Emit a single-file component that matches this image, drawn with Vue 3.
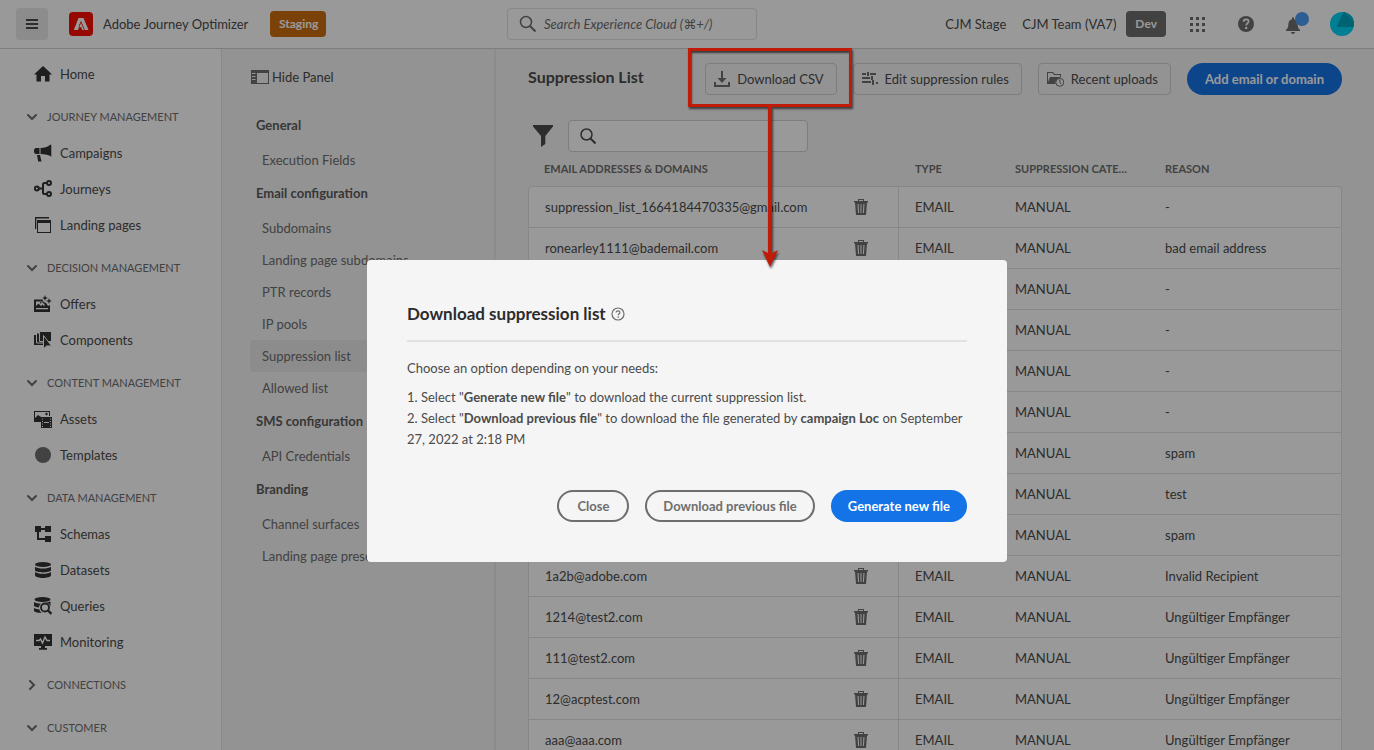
<script setup>
import { ref } from 'vue'

const query = ref('')
const filter = ref('')

const sections = [
  {
    title: 'JOURNEY MANAGEMENT',
    open: true,
    items: [
      { label: 'Campaigns', icon: 'campaigns' },
      { label: 'Journeys', icon: 'journeys' },
      { label: 'Landing pages', icon: 'pages' },
    ],
  },
  {
    title: 'DECISION MANAGEMENT',
    open: true,
    items: [
      { label: 'Offers', icon: 'offers' },
      { label: 'Components', icon: 'components' },
    ],
  },
  {
    title: 'CONTENT MANAGEMENT',
    open: true,
    items: [
      { label: 'Assets', icon: 'assets' },
      { label: 'Templates', icon: 'templates' },
    ],
  },
  {
    title: 'DATA MANAGEMENT',
    open: true,
    items: [
      { label: 'Schemas', icon: 'schemas' },
      { label: 'Datasets', icon: 'datasets' },
      { label: 'Queries', icon: 'queries' },
      { label: 'Monitoring', icon: 'monitoring' },
    ],
  },
  { title: 'CONNECTIONS', open: false, items: [] },
  { title: 'CUSTOMER', open: true, items: [] },
]

const groups = [
  { title: 'General', items: ['Execution Fields'] },
  {
    title: 'Email configuration',
    items: ['Subdomains', 'Landing page subdomains', 'PTR records', 'IP pools', 'Suppression list', 'Allowed list'],
  },
  { title: 'SMS configuration', items: ['API Credentials'] },
  { title: 'Branding', items: ['Channel surfaces', 'Landing page presets'] },
]

const rows = [
  ['suppression_list_1664184470335@gmail.com', '-'],
  ['ronearley1111@bademail.com', 'bad email address'],
  ['', '-'],
  ['', '-'],
  ['', '-'],
  ['', '-'],
  ['', 'spam'],
  ['', 'test'],
  ['', 'spam'],
  ['1a2b@adobe.com', 'Invalid Recipient'],
  ['1214@test2.com', 'Ungültiger Empfänger'],
  ['111@test2.com', 'Ungültiger Empfänger'],
  ['12@acptest.com', 'Ungültiger Empfänger'],
  ['aaa@aaa.com', 'Ungültiger Empfänger'],
]
</script>

<template>
  <div class="app">
    <header class="topbar">
      <button class="menu" type="button" aria-label="Menu">
        <svg width="12" height="10" viewBox="0 0 12 10"><path d="M0 0h12v2H0zM0 4h12v2H0zM0 8h12v2H0z" /></svg>
      </button>
      <svg class="logo" width="24" height="24" viewBox="0 0 24 24">
        <rect width="24" height="24" rx="4" fill="#fa0f00" />
        <path d="M9.500 6h5L19.500 18h-3.700L12 9 10 13.500h2.600l1.600 4.500H4.800z" fill="#fff" />
        <path d="M12 9.500 15.500 18h-2.300l-1.100-2.800H9.600z" fill="#fa0f00" />
        <path d="M12 10.800 15 18h-1.800l-1.100-2.800H10.200z" fill="#fff" />
        <path d="M12 10 9.900 15.200h2.200L13.200 18h-2.900L9 18 12 10z" fill="#fa0f00" />
      </svg>
      <span class="product">Adobe Journey Optimizer</span>
      <span class="tag staging">Staging</span>
      <label class="search">
        <svg width="18" height="18" viewBox="0 0 18 18"><circle cx="7" cy="7" r="5.500" fill="none" stroke="currentColor" stroke-width="1.500" /><path d="M11 11l5.500 5.500" stroke="currentColor" stroke-width="2" /></svg>
        <input v-model="query" type="search" placeholder="Search Experience Cloud (⌘+/)" aria-label="Search Experience Cloud" />
      </label>
      <div class="account">
        <span>CJM Stage</span>
        <span class="team">CJM Team (VA7)</span>
        <span class="tag dev">Dev</span>
        <button class="plain apps" type="button" aria-label="Apps">
          <svg width="15" height="15" viewBox="0 0 15 15"><path d="M0 0h3v3H0zM6 0h3v3H6zM12 0h3v3h-3zM0 6h3v3H0zM6 6h3v3H6zM12 6h3v3h-3zM0 12h3v3H0zM6 12h3v3H6zM12 12h3v3h-3z" /></svg>
        </button>
        <button class="plain help" type="button" aria-label="Help">
          <svg width="16" height="16" viewBox="0 0 16 16"><circle cx="8" cy="8" r="8" /><path d="M5.600 5.800C5.600 4 6.800 3.400 8.100 3.400c1.500 0 2.500.8 2.500 2.100 0 1.900-2.400 1.900-2.400 3.900" fill="none" stroke="#fff" stroke-width="1.700" /><circle cx="8.200" cy="11.900" r="1.200" fill="#fff" /></svg>
        </button>
        <button class="plain bell" type="button" aria-label="Notifications">
          <svg width="24" height="24" viewBox="0 0 24 24"><path d="M7 5.500h2v1.700c2.600.6 3.500 2.600 3.600 5 .1 3 .9 4.400 2.400 5.600V19H1v-1.200c1.500-1.200 2.300-2.600 2.400-5.600.1-2.400 1-4.400 3.600-5zM6 20h4c0 1.200-.9 2-2 2s-2-.8-2-2z" /><circle cx="17" cy="7" r="7" fill="#4c9bf5" /></svg>
        </button>
        <button class="plain avatar" type="button" aria-label="Profile">
          <svg width="24" height="24" viewBox="0 0 24 24"><defs><clipPath id="face"><circle cx="12" cy="12" r="12" /></clipPath></defs><g clip-path="url(#face)"><path d="M0 0h24v24H0z" fill="#00d2f5" /><path d="M13.500 0H24v15H6.500z" fill="#00a5bd" /><path d="M13.500 0 24 11V0z" fill="#00b4cf" /></g></svg>
        </button>
      </div>
    </header>

    <div class="body">
      <nav class="sidebar" aria-label="Main">
        <a class="nav-item" href="#">
          <svg width="18" height="18" viewBox="0 0 18 18"><path d="M9 1 0 9.500h2.500V16.500H7V11h4v5.500h4.500V9.500H18L14.500 6.100z" /></svg>
          Home
        </a>
        <section v-for="s in sections" :key="s.title">
          <button class="nav-head" type="button" :aria-expanded="s.open">
            <svg width="10" height="10" viewBox="0 0 10 10">
              <path :d="s.open ? 'M1 3l4 4 4-4' : 'M3 1l4 4-4 4'" fill="none" stroke="currentColor" stroke-width="2" stroke-linecap="round" />
            </svg>
            {{ s.title }}
          </button>
          <a v-for="item in s.items" :key="item.label" class="nav-item" href="#">
            <svg width="18" height="18" viewBox="0 0 18 18">
              <g v-if="item.icon === 'campaigns'"><path d="M2 4h3.500v6H2C.8 10 0 9 0 7s.8-3 2-3zM6.500 4C10 4 14 3 16 .7h1.300v12C15 10.800 11 10 6.500 10zM3 11h3l1.500 6.500H4.200z" /></g>
              <g v-else-if="item.icon === 'journeys'" fill="none" stroke="currentColor" stroke-width="2"><circle cx="2.800" cy="8.500" r="2" /><circle cx="15" cy="3" r="2" /><circle cx="15" cy="14" r="2" /><path d="M5 8.500h4M13 3h-2.500Q9 3 9 4.500v8Q9 14 10.500 14H13" /></g>
              <g v-else-if="item.icon === 'pages'"><path d="M1 1h14v1.500H2.300V13H1z" /><path d="M3 4h14v13H3zM4 7v9h12V7z" fill-rule="evenodd" /></g>
              <g v-else-if="item.icon === 'offers'"><path d="M0 4.500h8.500l1 2.500 2.500 1 2 3 2-1v7H0z" /><path d="M2 6.500h6.500v1.200L10.500 9v2H9.800L8.500 9.500 7 11 4.500 8.500 2 11zM2 13h12v1.200H2z" fill="#fff" /><circle cx="6.800" cy="7.800" r=".8" /><path d="M11 0l.8 2.200 2.200.8-2.200.8L11 6l-.8-2.200L8 3l2.200-.8zM15 3l.8 2.200 2.200.8-2.200.8L15 9l-.8-2.200L12 6l2.200-.8z" /></g>
              <g v-else-if="item.icon === 'components'"><path d="M0 4h10v10H0z" /><path d="M2.500 2h11v10h-11z" stroke="#fff" /><path d="M5.500.5h12v10h-12z" stroke="#fff" /><path d="M9.500 4.500v13.300l3.100-2.900 5 .1z" stroke="#fff" /></g>
              <g v-else-if="item.icon === 'assets'"><path d="M0 1h16v5h-1V2H1v6l3-3 3 2v5H0z" /><circle cx="12.500" cy="4" r="1.200" /><path d="M7 7h11v11H7zM8 8.500v1h1v-1zM8 11v1h1v-1zM8 13.500v1h1v-1zM8 16v1h1v-1zM16 8.500v1h1v-1zM16 11v1h1v-1zM16 13.500v1h1v-1zM16 16v1h1v-1zM10 12v1h5v-1z" fill-rule="evenodd" /></g>
              <circle v-else-if="item.icon === 'templates'" cx="9" cy="9" r="8" fill="#6e6e6e" />
              <g v-else-if="item.icon === 'schemas'"><path d="M1 1h6v2h4V1h6v6h-6V5H7v2H5v6h6v-2h6v6h-6v-2H3V7H1z" /></g>
              <g v-else-if="item.icon === 'datasets'"><ellipse cx="9" cy="3.500" rx="8" ry="2.600" /><path d="M1 5.800c2.500 2.400 13.500 2.400 16 0v3.500c-1 2.800-15 2.800-16 0zM1 11c2.500 2.400 13.500 2.400 16 0v3.300c-1 3.600-15 3.600-16 0z" /></g>
              <g v-else-if="item.icon === 'queries'"><ellipse cx="8.500" cy="2.500" rx="8" ry="2.400" /><path d="M0 5c2 1.200 4.500 1.700 7 1.700-1.300 1-2 2.300-2 3.800-2-.1-4-.6-5-1.500zM0 11c1.500.8 3.500 1.200 5.200 1.300.4 1.500 1.300 2.700 2.700 3.500C4 16 .7 15.300 0 14z" /><circle cx="11" cy="10.500" r="4" fill="none" stroke="currentColor" stroke-width="1.800" /><path d="M13.500 13l4 4" stroke="currentColor" stroke-width="2.400" /><path d="M12 5.500c2-.2 3.500-.5 4.500-1v5.200c-.3-2.200-2-3.900-4.500-4.200z" /></g>
              <g v-else><path d="M0 1h18v12h-7v2h2v1.800H5V15h2v-2H0z" /><path d="M2 7.500h3L6.500 6l2 4 2.500-6 2 3.500h3" fill="none" stroke="#fff" stroke-width="1.400" /></g>
            </svg>
            {{ item.label }}
          </a>
        </section>
      </nav>

      <aside class="panel">
        <button class="hide-panel" type="button">
          <svg width="18" height="14" viewBox="0 0 18 14"><path d="M0 0h18v14H0zM6 3v10h11V3zM1 3v1h3.500V3zM1 6v1h3.500V6zM1 9v1h3.500V9z" fill-rule="evenodd" /></svg>
          Hide Panel
        </button>
        <div v-for="g in groups" :key="g.title" class="group">
          <h2>{{ g.title }}</h2>
          <a v-for="i in g.items" :key="i" href="#" :class="{ current: i === 'Suppression list' }">{{ i }}</a>
        </div>
      </aside>

      <main class="content">
        <div class="title-row">
          <h1>Suppression List</h1>
          <div class="spot">
            <button class="quiet" type="button">
              <svg width="16" height="16" viewBox="0 0 16 16"><path d="M7 0h2v7h3.500L8 12 3.500 7H7zM0 11h2v3h12v-3h2v5H0z" /></svg>
              Download CSV
            </button>
            <div class="mark"></div>
            <svg class="arrow" width="24" height="164" viewBox="0 0 24 164"><path d="M10 0h4v146l6-3-8 17-8-17 6 3z" /></svg>
          </div>
          <button class="quiet" type="button">
            <svg width="16" height="16" viewBox="0 0 16 16"><path d="M0 2h4v2H0zM5 1h2v4H5zM8 2h6v2H8zM0 6h8v2H0zM9 5h2v4H9zM0 10h9v2H0zM10 9h2v5h-2zM14 11h2v2h-2z" /></svg>
            Edit suppression rules
          </button>
          <button class="quiet" type="button">
            <svg width="17" height="16" viewBox="0 0 17 16"><path d="M0 1h6l1.500 2H14v3h-1V4H7L5.500 2H1v9L3 6h10l.5 1C10 7 8 9.500 8.500 13H0z" /><circle cx="12.800" cy="11.300" r="4" fill="none" stroke="currentColor" /><path d="M12.800 8.500v3l1.500 1.200" fill="none" stroke="currentColor" /></svg>
            Recent uploads
          </button>
          <button class="pill primary" type="button">Add email or domain</button>
        </div>

        <div class="filter-row">
          <button class="plain" type="button" aria-label="Filter">
            <svg width="20" height="22" viewBox="0 0 20 22"><path d="M0 0h20v1.500L12.300 11v8L8 22V11L0 1.500z" /></svg>
          </button>
          <label class="filter">
            <svg width="16" height="16" viewBox="0 0 16 16"><circle cx="6.500" cy="6.500" r="5.500" fill="none" stroke="currentColor" stroke-width="1.500" /><path d="M10.500 10.500l5 5" stroke="currentColor" stroke-width="2" /></svg>
            <input v-model="filter" type="search" aria-label="Search the list" />
          </label>
        </div>

        <table>
          <colgroup><col class="c-email" /><col class="c-type" /><col class="c-cat" /><col /></colgroup>
          <thead>
            <tr><th>EMAIL ADDRESSES &amp; DOMAINS</th><th>TYPE</th><th>SUPPRESSION CATEGORY</th><th>REASON</th></tr>
          </thead>
          <tbody>
            <tr v-for="(r, i) in rows" :key="i">
              <td>
                <div class="address">
                  <span>{{ r[0] }}</span>
                  <button class="plain" type="button" aria-label="Delete">
                    <svg width="14" height="16" viewBox="0 0 14 16"><path d="M4 2V0h6v2h4v1.500h-1L12 16H2L1 3.500H0V2zM5 1v1h4V1zM3.500 5l.6 9h1l-.5-9zM6.500 5v9h1V5zM9.400 5l-.5 9h1l.6-9z" fill-rule="evenodd" /></svg>
                  </button>
                </div>
              </td>
              <td>EMAIL</td>
              <td>MANUAL</td>
              <td>{{ r[1] }}</td>
            </tr>
          </tbody>
        </table>
      </main>
    </div>

    <div class="overlay">
      <div class="dialog" role="dialog" aria-modal="true" aria-labelledby="dialog-title">
        <div class="dialog-head">
          <h2 id="dialog-title">Download suppression list</h2>
          <button class="plain" type="button" aria-label="More information">
            <svg width="14" height="14" viewBox="0 0 14 14"><circle cx="7" cy="7" r="6" fill="none" stroke="currentColor" stroke-width="1.200" /><path d="M5.200 5.500C5.200 4.400 6 3.800 7 3.800s1.900.6 1.900 1.600C8.900 6.700 7.200 6.800 7.200 8.300" fill="none" stroke="currentColor" stroke-width="1.200" /><circle cx="7.200" cy="10.100" r=".8" /></svg>
          </button>
        </div>
        <p>Choose an option depending on your needs:</p>
        <p>
          1. Select "<b>Generate new file</b>" to download the current suppression list.<br />
          2. Select "<b>Download previous file</b>" to download the file generated by <b>campaign Loc</b> on September 27, 2022 at 2:18 PM
        </p>
        <div class="actions">
          <button class="pill outline" type="button">Close</button>
          <button class="pill outline" type="button">Download previous file</button>
          <button class="pill primary" type="button">Generate new file</button>
        </div>
      </div>
    </div>
  </div>
</template>

<style>
body {
  margin: 0;
}
</style>

<style scoped>
.app,
.app * {
  box-sizing: border-box;
}
.app {
  position: relative;
  display: flex;
  flex-direction: column;
  height: 100vh;
  overflow: hidden;
  background: #f5f5f5;
  color: #4b4b4b;
  font-family: Lato, "Noto Sans", "DejaVu Sans", sans-serif;
  font-size: 13px;
  line-height: 20px;
}
button,
input {
  margin: 0;
  padding: 0;
  border: 0;
  background: none;
  color: inherit;
  font: inherit;
}
input {
  flex: 1;
  min-width: 0;
  outline: 0;
}
svg {
  display: block;
  flex: none;
  fill: currentColor;
}
a {
  color: inherit;
  text-decoration: none;
}
h1,
h2,
p {
  margin: 0;
}
.plain {
  display: flex;
}

/* Top bar */
.topbar {
  display: flex;
  flex: none;
  align-items: center;
  height: 49px;
  padding: 0 20px 0 16px;
  border-bottom: 1px solid #d0d0d0;
  background: #fff;
}
.menu {
  display: flex;
  align-items: center;
  justify-content: center;
  width: 32px;
  height: 32px;
  margin-right: 21px;
  border-radius: 4px;
  background: #eaeaea;
}
.product {
  width: 167px;
  margin-left: 10px;
}
.tag {
  padding: 3px 9px;
  border-radius: 4px;
  color: #fff;
  font-size: 12px;
  font-weight: 700;
}
.staging {
  width: 56px;
  background: #cb6f10;
  text-align: center;
}
.search {
  display: flex;
  align-items: center;
  gap: 7px;
  width: 250px;
  height: 32px;
  margin-left: 181px;
  padding: 0 11px;
  border: 1px solid #e1e1e1;
  border-radius: 4px;
  color: #6e6e6e;
}
.search input {
  font-style: italic;
}
.search input::placeholder {
  color: #6e6e6e;
  opacity: 1;
}
.account {
  display: flex;
  align-items: center;
  margin-left: auto;
}
.team {
  margin-left: 16px;
}
.dev {
  margin-left: 10px;
  background: #6e6e6e;
}
.apps,
.help,
.bell {
  color: #6e6e6e;
}
.apps {
  margin-left: 24px;
}
.help {
  margin-left: 33px;
}
.bell {
  margin-left: 31px;
}
.avatar {
  margin-left: 21px;
}

/* Left navigation */
.body {
  display: flex;
  flex: 1;
  min-height: 0;
}
.sidebar {
  flex: none;
  width: 222px;
  padding-top: 7px;
  border-right: 1px solid #e4e4e4;
  background: #fff;
  overflow: hidden;
}
.nav-item {
  display: flex;
  align-items: center;
  gap: 8px;
  height: 36px;
  padding-left: 34px;
}
.nav-item svg {
  color: #323232;
}
.nav-head {
  display: flex;
  align-items: center;
  gap: 10px;
  height: 36px;
  margin-top: 7px;
  padding-left: 27px;
  color: #6e6e6e;
  font-size: 11px;
}

/* Settings panel */
.panel {
  flex: none;
  width: 274px;
  padding: 0 27px 0 28px;
  border-right: 2px solid #eaeaea;
  overflow: hidden;
}
.hide-panel {
  display: flex;
  align-items: center;
  gap: 3px;
  height: 56px;
  margin-bottom: 4px;
  padding-left: 1px;
}
.hide-panel svg {
  color: #6e6e6e;
}
.group h2 {
  margin: 1px 0 3px;
  padding-left: 6px;
  font-size: 13px;
  line-height: 32px;
  color: #5c5c5c;
}
.group a {
  display: block;
  padding-left: 12px;
  border-radius: 4px;
  color: #6e6e6e;
  line-height: 32px;
  white-space: nowrap;
}
.group .current {
  background: #eaeaea;
}

/* Suppression list */
.content {
  flex: 1;
  min-width: 0;
  padding: 14px 32px 0;
}
.title-row {
  display: flex;
  gap: 16px;
}
h1 {
  margin-right: auto;
  font-size: 16px;
  line-height: 28px;
}
.spot {
  position: relative;
}
.quiet {
  display: flex;
  align-items: center;
  gap: 7px;
  height: 32px;
  padding: 0 12px 0 8px;
  border: 1px solid #d0d0d0;
  border-radius: 4px;
}
.quiet svg {
  color: #6e6e6e;
}
.mark {
  position: absolute;
  z-index: 2;
  inset: -15px -15px -12px -17px;
  border: 3px solid #c01a08;
  box-shadow: 1px 2px 2px rgba(0, 0, 0, 0.6), inset 1px 2px 2px rgba(0, 0, 0, 0.6);
  pointer-events: none;
}
.arrow {
  position: absolute;
  z-index: 2;
  top: 44px;
  left: 53px;
  fill: #c01a08;
  filter: drop-shadow(1px 2px 1px rgba(0, 0, 0, 0.6));
  pointer-events: none;
}
.pill {
  min-width: 72px;
  height: 32px;
  padding: 0 17px;
  border-radius: 16px;
  font-weight: 700;
}
.title-row .pill {
  padding: 0 18px;
}
.primary {
  background: #1473e6;
  color: #fff;
}
.outline {
  border: 2px solid #6e6e6e;
  padding: 0 16px;
  color: #6e6e6e;
}
.filter-row {
  display: flex;
  align-items: center;
  gap: 15px;
  margin-top: 25px;
  padding-left: 5px;
}
.filter {
  display: flex;
  align-items: center;
  gap: 8px;
  width: 240px;
  height: 32px;
  padding: 0 11px;
  border: 1px solid #d0d0d0;
  border-radius: 4px;
  background: #fff;
}
table {
  width: 100%;
  table-layout: fixed;
  border-collapse: separate;
  border-spacing: 0;
}
.c-email {
  width: 371px;
}
.c-type {
  width: 100px;
}
.c-cat {
  width: 150px;
}
th {
  height: 34px;
  padding: 0 16px;
  overflow: hidden;
  color: #6e6e6e;
  font-size: 11px;
  text-align: left;
  text-overflow: ellipsis;
  white-space: nowrap;
}
td {
  height: 41px;
  padding: 0 16px;
  border-bottom: 1px solid #e1e1e1;
  background: #fff;
  white-space: nowrap;
}
td:first-child {
  border-right: 1px solid #e1e1e1;
  border-left: 1px solid #e1e1e1;
}
td:last-child {
  border-right: 1px solid #e1e1e1;
}
tbody tr:first-child td {
  height: 42px;
  border-top: 1px solid #e1e1e1;
}
tbody tr:first-child td:first-child {
  border-top-left-radius: 4px;
}
tbody tr:first-child td:last-child {
  border-top-right-radius: 4px;
}
.address {
  display: flex;
  align-items: center;
  justify-content: space-between;
  padding-right: 14px;
}
.address .plain {
  color: #6e6e6e;
}

/* Dialog */
.overlay {
  position: absolute;
  z-index: 1;
  inset: 0;
  display: flex;
  align-items: center;
  justify-content: center;
  padding-top: 72px;
  background: rgba(0, 0, 0, 0.4);
}
.dialog {
  width: 640px;
  padding: 40px;
  border-radius: 4px;
  background: #f5f5f5;
  line-height: 21px;
}
.dialog-head {
  display: flex;
  align-items: center;
  gap: 5px;
  padding-bottom: 12px;
  margin-bottom: 16px;
  border-bottom: 2px solid #e1e1e1;
  color: #6e6e6e;
}
.dialog-head h2 {
  color: #2c2c2c;
  font-size: 17px;
  line-height: 28px;
}
.dialog p + p {
  margin-top: 8px;
}
.actions {
  display: flex;
  justify-content: flex-end;
  gap: 16px;
  margin-top: 40px;
}
</style>
